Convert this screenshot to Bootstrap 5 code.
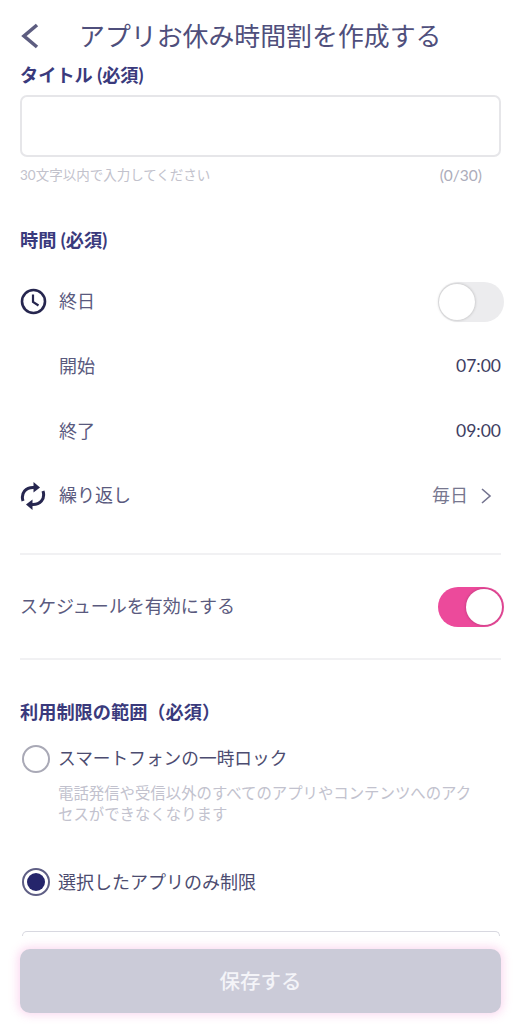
<!doctype html>
<html lang="ja">
<head>
<meta charset="utf-8">
<meta name="viewport" content="width=device-width, initial-scale=1">
<title>アプリお休み時間割を作成する</title>
<link rel="stylesheet" href="https://cdn.jsdelivr.net/npm/bootstrap@5.3.0/dist/css/bootstrap.min.css">
<style>
html,body{height:1024px;overflow:hidden;background:#fff}
body{font-family:"Lato","Noto Sans CJK JP",sans-serif;color:#4c4c70;position:relative}
.page-wrap{padding:0 20px}
.top-bar{height:63px;padding-top:8px;align-items:center}
.top-bar h1{font-size:25.9px;font-weight:400;margin:0 0 0 39px;color:#4f4f7c;line-height:52px}
.back-ic{width:20px;height:30px;flex:none}
.sec-label{font-size:18.2px;font-weight:700;color:#3a3a7c;line-height:24px;margin:0}
.title-input.form-control{height:62px;margin-top:8px;border:2px solid #e6e6e9;border-radius:7px;box-shadow:none}
.hint-line{height:18px;margin-top:9px;color:#c2c2cc;font-size:13.5px;line-height:18px}
.hint-count{font-size:15.5px;color:#adadbb;margin-right:19px}
.time-head{margin-top:44px}
.time-list{margin-top:17px}
.set-row{height:65px;font-size:18px;color:#5a5a7e}
.set-row.row-last{height:63px}
.set-row .val{color:#3e3e62;font-size:17.5px}
.rep-val{color:#77778f;font-size:18px}
.ic-slot{width:39px;flex:none;display:flex}
.sw{width:66px;height:40px;border-radius:20px;position:relative;margin-right:-3px;flex:none}
.sw-off{background:#ececee}
.sw-on{background:#ec4a9b}
.sw i{position:absolute;top:2px;width:36px;height:36px;border-radius:50%;background:#fff;box-shadow:0 0 3px rgba(0,0,0,.25)}
.sw-off i{left:1px}
.sw-on i{right:2px}
.rule-line{border-top:2px solid #f1f1f3}
.rule-first{margin-top:26px}
.switch-row{height:103px;font-size:18px;color:#5a5a7e}
.limit-head{margin-top:40px}
.opt-row{font-size:18px;color:#4c4c70;height:40px}
.opt-first{margin-top:15px;font-size:17.7px}
.opt-second{margin-top:37px}
.radio-dot{width:28px;height:28px;border-radius:50%;border:2px solid #a9a9b6;margin:0 8px 0 2px;flex:none;background:#fff;display:flex;align-items:center;justify-content:center}
.radio-dot.is-on{border:2px solid #5f5f85}
.radio-dot.is-on::after{content:"";width:18px;height:18px;border-radius:50%;background:#25256b}
.opt-desc{font-size:15.4px;line-height:21px;color:#c2c2ce;margin:4px 20px 0 38px}
.peek-card{border:1px solid #d8d8e0;border-bottom:0;border-radius:10px 10px 0 0;height:5px;margin:29px 1px 0 2px}
.save-wrap{position:absolute;left:20px;right:20px;top:949px}
.save-btn.btn{width:100%;height:64px;background:#cbcbd8;border:0;border-radius:10px;color:#f4f4f8;font-size:20.5px;font-weight:500;box-shadow:0 0 10px 2px rgba(240,120,200,.28);opacity:1}
.chev-ic{margin:0 8px 0 11px}
</style>
</head>
<body>
<div class="page-wrap">
  <header class="top-bar d-flex">
    <svg class="back-ic" viewBox="0 0 20 30" aria-hidden="true"><path d="M17 4 L4 15 L17 26" fill="none" stroke="#5d5d80" stroke-width="3.6"/></svg>
    <h1>アプリお休み時間割を作成する</h1>
  </header>

  <label class="sec-label d-block" for="ttl">タイトル (必須)</label>
  <input id="ttl" class="form-control title-input" type="text">
  <div class="hint-line d-flex justify-content-between align-items-center">
    <span>30文字以内で入力してください</span><span class="hint-count">(0/30)</span>
  </div>

  <p class="sec-label time-head">時間 (必須)</p>

  <div class="time-list">
    <div class="set-row d-flex align-items-center">
      <span class="ic-slot"><svg width="27" height="27" viewBox="0 0 27 27" aria-hidden="true"><circle cx="13.5" cy="13.5" r="11.5" fill="none" stroke="#26264f" stroke-width="2.6"/><path d="M13 6.5 V14 L18.5 17.5" fill="none" stroke="#26264f" stroke-width="2.2"/></svg></span>
      <span class="flex-grow-1">終日</span>
      <span class="sw sw-off"><i></i></span>
    </div>
    <div class="set-row d-flex align-items-center">
      <span class="ic-slot"></span><span class="flex-grow-1">開始</span><span class="val">07:00</span>
    </div>
    <div class="set-row d-flex align-items-center">
      <span class="ic-slot"></span><span class="flex-grow-1">終了</span><span class="val">09:00</span>
    </div>
    <div class="set-row row-last d-flex align-items-center">
      <span class="ic-slot"><svg width="26" height="30" viewBox="0 0 26 30" aria-hidden="true"><path d="M3 20 C0.5 12 6 6 14 6.5" fill="none" stroke="#26264f" stroke-width="3"/><path d="M13.5 1 L20 6.5 L13.5 11.5Z" fill="#26264f"/><path d="M23 10 C25.5 18 20 24 12 23.5" fill="none" stroke="#26264f" stroke-width="3"/><path d="M12.5 18.5 L6 23.5 L12.5 29Z" fill="#26264f"/></svg></span>
      <span class="flex-grow-1">繰り返し</span>
      <span class="rep-val">毎日</span>
      <svg class="chev-ic" width="14" height="20" viewBox="0 0 14 20" aria-hidden="true"><path d="M3 3 L11 10 L3 17" fill="none" stroke="#73738f" stroke-width="1.6"/></svg>
    </div>
  </div>

  <div class="rule-line rule-first"></div>
  <div class="switch-row d-flex align-items-center justify-content-between">
    <span>スケジュールを有効にする</span>
    <span class="sw sw-on"><i></i></span>
  </div>
  <div class="rule-line"></div>

  <p class="sec-label limit-head">利用制限の範囲（必須）</p>

  <div class="opt-row opt-first d-flex align-items-center">
    <span class="radio-dot"></span><span>スマートフォンの一時ロック</span>
  </div>
  <p class="opt-desc">電話発信や受信以外のすべてのアプリやコンテンツへのアクセスができなくなります</p>
  <div class="opt-row opt-second d-flex align-items-center">
    <span class="radio-dot is-on"></span><span>選択したアプリのみ制限</span>
  </div>
  <div class="peek-card"></div>
</div>
<div class="save-wrap"><button class="btn save-btn" type="button">保存する</button></div>
</body>
</html>
